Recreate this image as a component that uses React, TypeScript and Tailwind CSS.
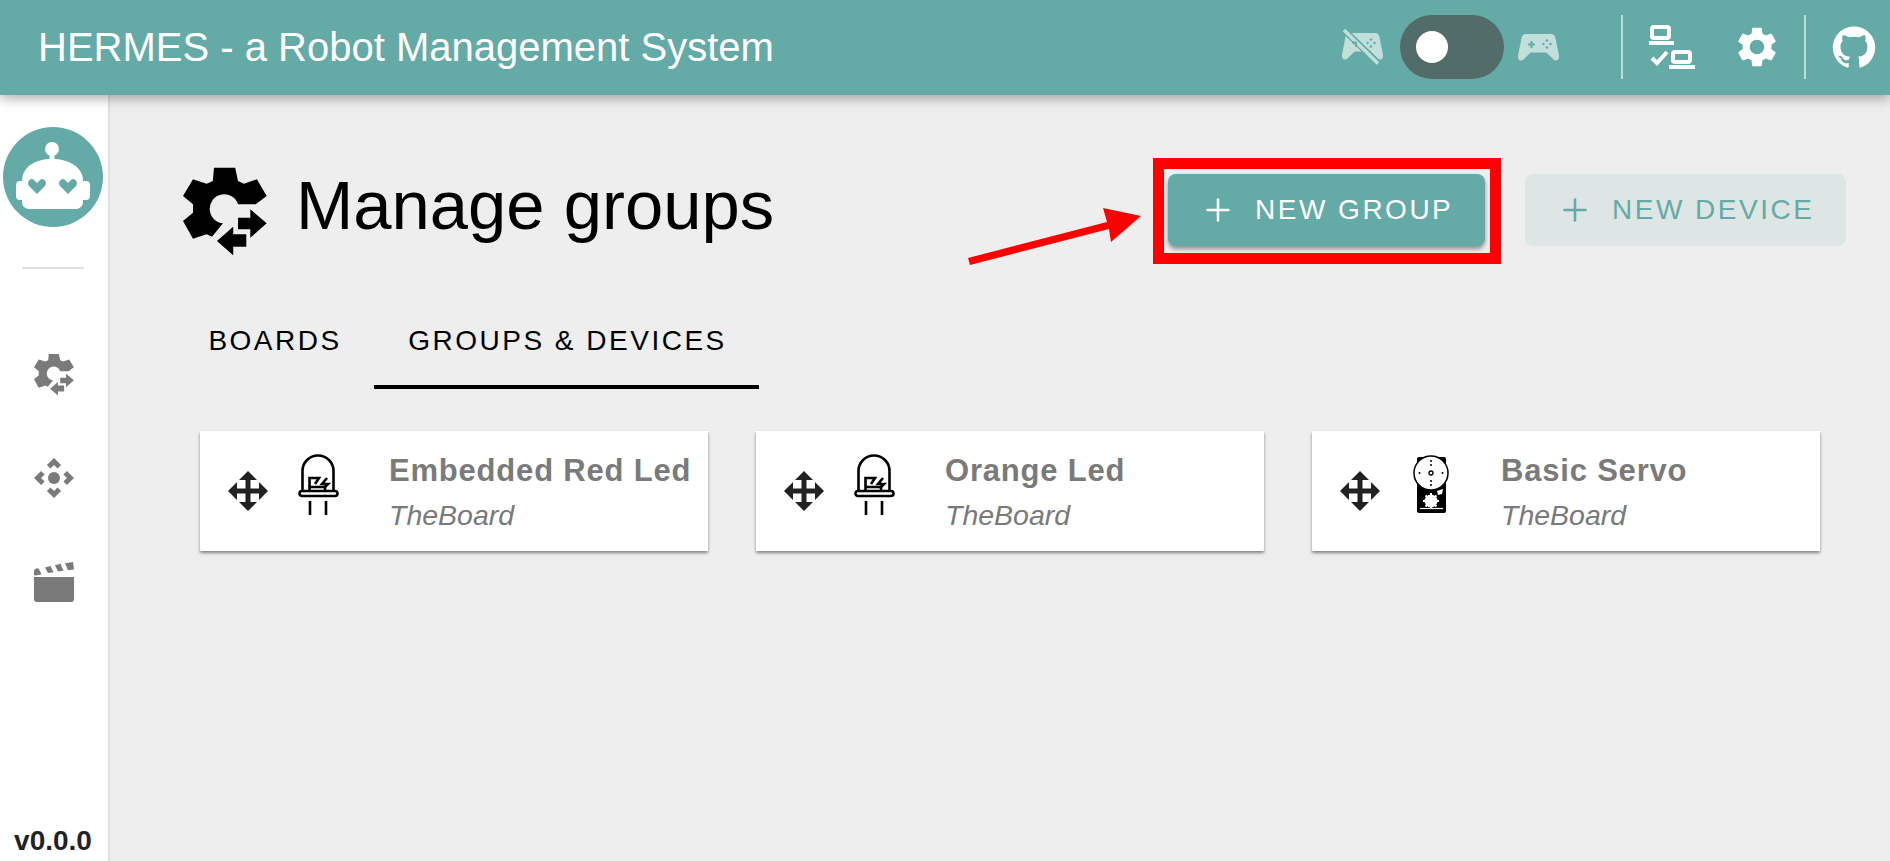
import { Plus } from 'lucide-react';
import { MdControlCamera, MdSettings } from 'react-icons/md';

const GearTransfer = ({ className }: { className: string }) => (
  <svg viewBox="0 0 84 90" className={className} fill="currentColor">
    <path d="M31 1.7H52.2L55 15L61 17.7L73.9 13.3L83.7 30L72.7 38.3H55A14.5 14.5 0 1 0 40 57.3L29 70.7L23.7 68.3L10 72.7L0 55L10 46.7V38.3L0 30L10 13.3L23.7 17.7L29.8 15Z" />
    <path d="M55 51.7H67.3V43.3L83.7 57.3L67.3 71.7V63.3H55Z" />
    <path d="M63.3 68.3H50.2V60.7L33.9 75L50.2 89.3V80.7H63.3Z" />
  </svg>
);

const Clapper = ({ className }: { className: string }) => (
  <svg viewBox="0 0 40 40" className={className} fill="currentColor">
    <path d="M0 15H40V37a3 3 0 0 1-3 3H3a3 3 0 0 1-3-3Z" />
    <path d="M0 9.5a3 3 0 0 1 5-2.4L7.5 12.6L1 13.5L0 13Z" />
    <path d="M11 5.5L16.5 4L19.5 10.2L14 11Z" />
    <path d="M21 3.2L26.5 1.8L29.5 8.8L24 9.6Z" />
    <path d="M31 1.2L39 0L40 7.4L34 8.2Z" />
  </svg>
);

const Pad = () => (
  <svg viewBox="0 0 41 27" className="h-[27px] w-[41px]">
    <path
      d="M8 0H33C36 0 37 2 37.5 4L41 22C41.5 26 38 28 35.5 25.5L29.5 19.5C29 19 28.5 18.5 27.5 18.5H13.5C12.5 18.5 12 19 11.5 19.5L5.5 25.5C3 28-.5 26 0 22L3.5 4C4 2 5 0 8 0Z"
      fill="#c3dfdc"
    />
    <path d="M10 9.5H12.5V7H14.5V9.5H17V11.5H14.5V14H12.5V11.5H10Z" fill="#64aaa6" />
    <circle cx="29" cy="6.5" r="1.2" fill="#64aaa6" />
    <circle cx="29" cy="13.5" r="1.2" fill="#64aaa6" />
    <circle cx="25.5" cy="10" r="1.2" fill="#64aaa6" />
    <circle cx="32.5" cy="10" r="1.2" fill="#64aaa6" />
  </svg>
);

const PadOff = () => (
  <svg viewBox="0 0 41 36" className="h-[36px] w-[41px]">
    <path
      d="M8 4H33C36 4 37 6 37.5 8L41 26C41.5 30 38 32 35.5 29.5L29.5 23.5C29 23 28.5 22.5 27.5 22.5H13.5C12.5 22.5 12 23 11.5 23.5L5.5 29.5C3 32-.5 30 0 26L3.5 8C4 6 5 4 8 4Z"
      fill="#c3dfdc"
    />
    <path d="M1 0L37 35" stroke="#64aaa6" strokeWidth="6.5" />
    <path d="M2 1L36 34.5" stroke="#c3dfdc" strokeWidth="3.5" />
    <circle cx="29" cy="10.5" r="1.2" fill="#64aaa6" />
    <circle cx="29" cy="17.5" r="1.2" fill="#64aaa6" />
    <circle cx="25.5" cy="14" r="1.2" fill="#64aaa6" />
    <circle cx="32.5" cy="14" r="1.2" fill="#64aaa6" />
    <path d="M10 13.5H14V18" stroke="#64aaa6" strokeWidth="1.8" fill="none" />
  </svg>
);

const Laptops = () => (
  <svg viewBox="0 0 46 44" className="h-[44px] w-[46px]" fill="none" stroke="#fff">
    <rect x="3" y="2" width="17" height="11" rx="2" strokeWidth="4" />
    <path d="M0 18H25" strokeWidth="4" />
    <rect x="24" y="27" width="17" height="10" rx="2" strokeWidth="4" />
    <path d="M20 42H46" strokeWidth="4" />
    <path d="M3 33L8 38L18 27" strokeWidth="4" />
  </svg>
);

const GithubMark = () => (
  <svg viewBox="0 0 24 24" className="h-[46px] w-[46px]" fill="#fff">
    <path d="M12 1.27a11 11 0 00-3.48 21.46c.55.09.73-.28.73-.55v-1.84c-3.03.64-3.67-1.46-3.67-1.46-.55-1.29-1.28-1.65-1.28-1.65-.92-.65.1-.65.1-.65 1.1 0 1.73 1.1 1.73 1.1.92 1.65 2.57 1.2 3.21.92a2 2 0 01.64-1.47c-2.47-.27-5.04-1.19-5.04-5.5 0-1.1.46-2.1 1.2-2.84a3.76 3.76 0 010-2.93s.91-.28 3.11 1.1c1.8-.49 3.7-.49 5.5 0 2.1-1.38 3.02-1.1 3.02-1.1a3.76 3.76 0 010 2.93c.83.74 1.2 1.74 1.2 2.94 0 4.21-2.57 5.13-5.04 5.4.45.37.82.92.82 2.02v3.03c0 .27.1.64.73.55A11 11 0 0012 1.27" />
  </svg>
);

const RobotLogo = () => (
  <div className="flex h-[100px] w-[100px] items-center justify-center rounded-full bg-[#64aaa6]">
    <svg viewBox="0 0 100 100" className="h-[100px] w-[100px]">
      <circle cx="49" cy="22" r="7" fill="#fff" />
      <rect x="46.5" y="26" width="5" height="8" fill="#fff" />
      <path d="M19 54C19 40 32 32 49 32C66 32 80 40 80 54V75A7 7 0 0 1 73 82H26A7 7 0 0 1 19 75Z" fill="#fff" />
      <path d="M19 54H17A4 4 0 0 0 13 58V69A4 4 0 0 0 17 73H19Z" fill="#fff" />
      <path d="M80 54H83A4 4 0 0 1 87 58V69A4 4 0 0 1 83 73H80Z" fill="#fff" />
      <path d="M34 67L26 59C23 55 28 50 31 53L34 56L37 53C40 50 45 55 42 59Z" fill="#64aaa6" />
      <path d="M65 67L57 59C54 55 59 50 62 53L65 56L68 53C71 50 76 55 73 59Z" fill="#64aaa6" />
    </svg>
  </div>
);

const MoveArrows = () => (
  <svg viewBox="0 0 40 40" className="h-[40px] w-[40px]" fill="#222">
    <path d="M20 0L29 9H22.5V17.5H31V11L40 20L31 29V22.5H22.5V31H29L20 40L11 31H17.5V22.5H9V29L0 20L9 11V17.5H17.5V9H11Z" />
  </svg>
);

const LedIcon = () => (
  <svg viewBox="0 0 41 61" className="h-[61px] w-[41px]" fill="none" stroke="#000" strokeWidth="2.6">
    <path d="M4.5 37V17A15.5 15.5 0 0 1 35.5 17V37" />
    <rect x="1.5" y="37" width="38" height="5" rx="2.5" />
    <path d="M12 47V61M28 47V61" />
    <path d="M11.5 37V24H21L17 30" />
    <path d="M29 24L24 30H30L26 34" />
    <path d="M11.5 33H27V37" />
  </svg>
);

const ServoIcon = () => (
  <svg viewBox="0 0 36 60" className="h-[60px] w-[36px]">
    <rect x="4" y="3" width="29" height="56" rx="2" fill="#000" />
    <circle cx="18" cy="19" r="17" fill="#fff" stroke="#000" strokeWidth="1.5" />
    <circle cx="18" cy="19" r="2" fill="none" stroke="#000" strokeWidth="1.3" />
    <circle cx="6.5" cy="19" r="1" fill="#000" />
    <circle cx="29.5" cy="19" r="1" fill="#000" />
    <path d="M18 6V8M18 10V12M18 26V28M18 30V32" stroke="#000" strokeWidth="1.5" />
    <circle cx="18" cy="47" r="6.5" fill="#fff" />
    <path d="M18 39V54M10 47H26M12.5 41.5L23.5 52.5M23.5 41.5L12.5 52.5" stroke="#fff" strokeWidth="2" />
    <path d="M7 54.5H30" stroke="#fff" strokeWidth="1.2" />
    <path d="M24 37L30 35L29 40L25 41Z" fill="#fff" />
  </svg>
);

const items = [
  { name: 'Embedded Red Led', icon: <LedIcon /> },
  { name: 'Orange Led', icon: <LedIcon /> },
  { name: 'Basic Servo', icon: <ServoIcon /> },
];

const DeviceCard = ({ name, icon }: { name: string; icon: React.ReactNode }) => (
  <div className="flex h-[120px] w-[508px] items-center bg-white pl-[28px] shadow-[0_2px_3px_rgba(0,0,0,0.45)]">
    <MoveArrows />
    <div className="mb-[14px] ml-[30px] flex w-[41px] justify-center">{icon}</div>
    <div className="ml-[50px] flex flex-col pt-[4px] text-[#7a7a7a]">
      <span className="text-[31px] leading-[40px] font-bold tracking-[0.8px]">{name}</span>
      <span className="mt-[4px] text-[28.5px] leading-[40px] italic">TheBoard</span>
    </div>
  </div>
);

export default function App() {
  return (
    <div className="flex h-screen flex-col overflow-hidden bg-[#eeeeee] font-['Liberation_Sans',Arial,sans-serif]">
      <header className="relative z-10 flex h-[95px] shrink-0 items-center bg-[#64aaa6] pl-[38px] text-white shadow-[0_3px_12px_rgba(0,0,0,0.35)]">
        <h1 className="pb-[2px] text-[40px] leading-none font-normal">HERMES - a Robot Management System</h1>
        <div className="ml-auto flex items-center pb-[1px]">
          <PadOff />
          <div className="ml-[17px] flex h-[64px] w-[104px] items-center rounded-full bg-[#526c6a] pl-[16px]">
            <div className="h-[32px] w-[32px] rounded-full bg-white" />
          </div>
          <div className="ml-[14px]">
            <Pad />
          </div>
          <div className="ml-[62px] h-[64px] w-[2px] bg-white/60" />
          <div className="ml-[26px]">
            <Laptops />
          </div>
          <MdSettings className="ml-[38px] text-white" size={48} />
          <div className="ml-[23px] h-[64px] w-[2px] bg-white/60" />
          <div className="mr-[13px] ml-[25px]">
            <GithubMark />
          </div>
        </div>
      </header>

      <div className="flex min-h-0 flex-1">
        <aside className="flex w-[110px] shrink-0 flex-col items-center border-r-2 border-[#e0e0e0] bg-white pt-[32px] pr-[2px] text-[#7a7a7a]">
          <RobotLogo />
          <div className="mt-[40px] h-[2px] w-[62px] bg-[#e0e0e0]" />
          <GearTransfer className="mt-[84px] ml-[2px] h-[43px] w-[40px]" />
          <MdControlCamera className="mt-[58px] ml-[2px]" size={48} />
          <Clapper className="mt-[60px] ml-[2px] h-[40px] w-[40px]" />
          <div className="mt-auto pb-[4px] text-[28px] leading-[32px] font-bold text-[#1f2328]">v0.0.0</div>
        </aside>

        <main className="min-w-0 flex-1 pt-[71px]">
          <div className="flex items-start pr-[44px] pl-[73px]">
            <GearTransfer className="h-[90px] w-[84px] text-black" />
            <h2 className="ml-[29px] text-[68.8px] leading-[80px] font-normal text-black">Manage groups</h2>
            <div className="relative mt-[8px] ml-auto">
              <button className="flex h-[72px] w-[317px] items-center justify-start gap-[19px] rounded-[8px] bg-[#64aaa6] pl-[32px] text-[28px] tracking-[2.5px] text-white shadow-[0_3px_4px_rgba(0,0,0,0.4)]">
                <Plus size={36} strokeWidth={1.7} />
                NEW GROUP
              </button>
              <div className="pointer-events-none absolute -top-[16px] -right-[16px] -bottom-[18px] -left-[15px] border-[11px] border-[#ff0000]" />
              <svg viewBox="0 0 180 62" className="absolute top-[32px] -left-[204px] h-[62px] w-[180px]">
                <path d="M4 52L143 16L139 2L177 10L147 36L145 23L6 59Z" fill="#ff0000" />
              </svg>
            </div>
            <button className="mt-[8px] ml-[40px] flex h-[72px] w-[321px] items-center justify-start gap-[19px] rounded-[8px] bg-[#dde6e4] pl-[32px] text-[28px] tracking-[2.5px] text-[#64aaa6]">
              <Plus size={36} strokeWidth={1.7} />
              NEW DEVICE
            </button>
          </div>

          <div className="mt-[35px] flex pl-[64px] text-[28px] tracking-[2.5px] text-black">
            <div className="flex h-[98px] w-[200px] items-center justify-center pt-[1px] pl-[2px]">BOARDS</div>
            <div className="flex h-[98px] w-[385px] items-center justify-center border-b-4 border-black pt-[6px] pl-[2px]">
              GROUPS &amp; DEVICES
            </div>
          </div>

          <div className="mt-[42px] flex gap-[48px] pl-[90px]">
            {items.map((item) => (
              <DeviceCard key={item.name} name={item.name} icon={item.icon} />
            ))}
          </div>
        </main>
      </div>
    </div>
  );
}
